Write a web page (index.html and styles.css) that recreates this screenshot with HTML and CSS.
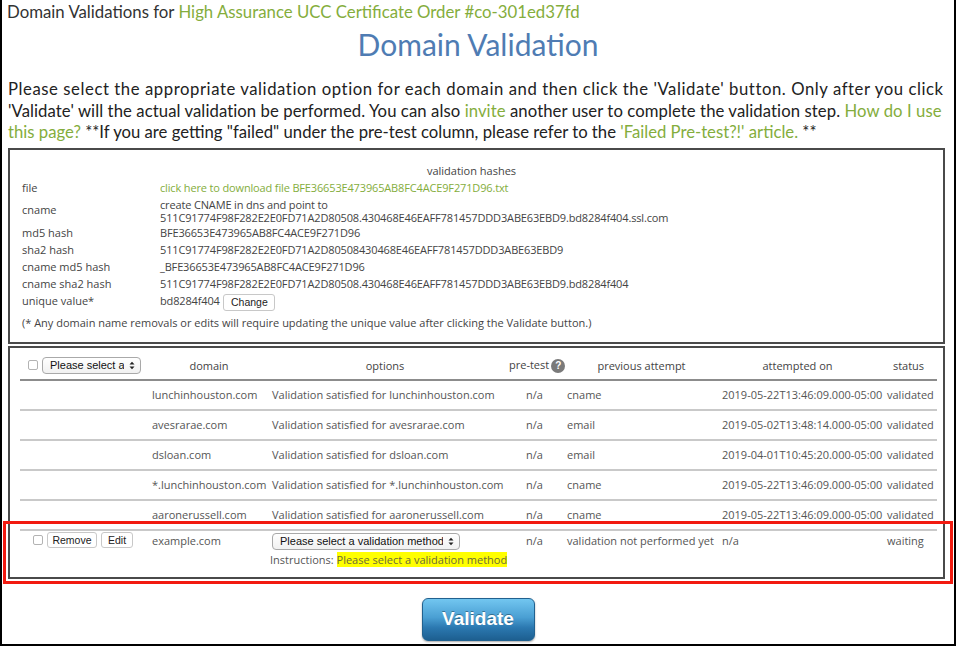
FILE: index.html
```html
<!DOCTYPE html>
<html>
<head>
<meta charset="utf-8">
<link rel="stylesheet" href="styles.css">
</head>
<body>
<div class="frame">
  <div class="crumb">Domain Validations for <a class="link" href="#">High Assurance UCC Certificate Order #co-301ed37fd</a></div>
  <h1 class="title">Domain Validation</h1>
  <p class="intro"><span class="line-a">Please select the appropriate validation option for each domain and then click the 'Validate' button. Only after you click</span><br><span class="line-b">'Validate' will the actual validation be performed. You can also <a class="link" href="#">invite</a> another user to complete the validation step. <a class="link" href="#">How do I use</a></span><br><a class="link" href="#">this page?</a> **If you are getting "failed" under the pre-test column, please refer to the <a class="link" href="#">'Failed Pre-test?!' article.</a> **</p>

  <div class="box hashes">
    <div class="hash-caption">validation hashes</div>
    <div class="hash-grid">
      <div class="hl">file</div><div class="hv"><a class="link" href="#">click here to download file BFE36653E473965AB8FC4ACE9F271D96.txt</a></div>
      <div class="hl hl-mid">cname</div><div class="hv hv-two">create CNAME in dns and point to<br>511C91774F98F282E2E0FD71A2D80508.430468E46EAFF781457DDD3ABE63EBD9.bd8284f404.ssl.com</div>
      <div class="hl">md5 hash</div><div class="hv">BFE36653E473965AB8FC4ACE9F271D96</div>
      <div class="hl">sha2 hash</div><div class="hv">511C91774F98F282E2E0FD71A2D80508430468E46EAFF781457DDD3ABE63EBD9</div>
      <div class="hl">cname md5 hash</div><div class="hv">_BFE36653E473965AB8FC4ACE9F271D96</div>
      <div class="hl">cname sha2 hash</div><div class="hv">511C91774F98F282E2E0FD71A2D80508.430468E46EAFF781457DDD3ABE63EBD9.bd8284f404</div>
      <div class="hl">unique value*</div><div class="hv">bd8284f404 <span class="btn btn-change">Change</span></div>
    </div>
    <div class="note">(* Any domain name removals or edits will require updating the unique value after clicking the Validate button.)</div>
  </div>

  <div class="box domains">
    <table class="dtable">
      <colgroup>
        <col class="c1"><col class="c2"><col class="c3"><col class="c4"><col class="c5"><col class="c6"><col class="c7">
      </colgroup>
      <thead>
        <tr>
          <th class="th-ctrl"><span class="ctrl"><span class="cb"></span><span class="select sel-head"><span class="sel-text">Please select a v</span><svg class="arr" width="6" height="9" viewBox="0 0 6 9"><path d="M0.5 3.5 L3 0.8 L5.5 3.5 Z M0.5 5.5 L3 8.2 L5.5 5.5 Z" fill="#222"/></svg></span></span></th>
          <th class="th-dom">domain</th>
          <th>options</th>
          <th class="th-pre">pre-test<span class="qmark">?</span></th>
          <th class="th-prev">previous attempt</th>
          <th>attempted on</th>
          <th>status</th>
        </tr>
      </thead>
      <tbody>
        <tr><td></td><td>lunchinhouston.com</td><td>Validation satisfied for lunchinhouston.com</td><td class="na">n/a</td><td>cname</td><td>2019-05-22T13:46:09.000-05:00</td><td>validated</td></tr>
        <tr><td></td><td>avesrarae.com</td><td>Validation satisfied for avesrarae.com</td><td class="na">n/a</td><td>email</td><td>2019-05-02T13:48:14.000-05:00</td><td>validated</td></tr>
        <tr><td></td><td>dsloan.com</td><td>Validation satisfied for dsloan.com</td><td class="na">n/a</td><td>email</td><td>2019-04-01T10:45:20.000-05:00</td><td>validated</td></tr>
        <tr><td></td><td>*.lunchinhouston.com</td><td>Validation satisfied for *.lunchinhouston.com</td><td class="na">n/a</td><td>cname</td><td>2019-05-22T13:46:09.000-05:00</td><td>validated</td></tr>
        <tr><td></td><td>aaronerussell.com</td><td>Validation satisfied for aaronerussell.com</td><td class="na">n/a</td><td>cname</td><td>2019-05-22T13:46:09.000-05:00</td><td>validated</td></tr>
        <tr class="pending">
          <td class="td-ctrl"><span class="ctrl"><span class="cb"></span><span class="btn btn-remove">Remove</span><span class="btn btn-edit">Edit</span></span></td>
          <td>example.com</td>
          <td>
            <span class="select sel-row"><span class="sel-text">Please select a validation method</span><svg class="arr" width="6" height="9" viewBox="0 0 6 9"><path d="M0.5 3.5 L3 0.8 L5.5 3.5 Z M0.5 5.5 L3 8.2 L5.5 5.5 Z" fill="#222"/></svg></span>
            <div class="instr">Instructions: <span class="hl-yellow">Please select a validation method</span></div>
          </td>
          <td class="na">n/a</td>
          <td>validation not performed yet</td>
          <td>n/a</td>
          <td>waiting</td>
        </tr>
      </tbody>
    </table>
  </div>

  <div class="actions"><button class="validate">Validate</button></div>

  <div class="redbox"></div>
</div>
</body>
</html>
```

FILE: styles.css
```css
html, body {
  margin: 0;
  padding: 0;
  background: #fff;
}

.frame {
  position: relative;
  box-sizing: border-box;
  width: 956px;
  height: 646px;
  border-left: 2px solid #000;
  border-right: 2px solid #000;
  border-bottom: 2px solid #000;
  font-family: "Lato", "Open Sans", sans-serif;
  color: #222;
  overflow: hidden;
}

.link {
  color: #84ad3c;
  text-decoration: none;
}

.crumb {
  padding-left: 5px;
  font-size: 16.8px;
  line-height: 24px;
  height: 24px;
  color: #333;
  white-space: nowrap;
}

.title {
  margin: 0;
  text-align: center;
  font-size: 30px;
  line-height: 40px;
  font-weight: 400;
  color: #4f7cb3;
}

.intro {
  margin: 15px 0 0 0;
  padding: 0 6px;
  font-size: 16.7px;
  line-height: 21.5px;
  color: #222;
  white-space: nowrap;
}

.line-a {
  letter-spacing: 0.57px;
}

.line-b {
  letter-spacing: 0.08px;
}

.box {
  box-sizing: border-box;
  margin: 0 9px 0 6px;
  border: 2px solid #4a4a4a;
  font-family: "Open Sans", sans-serif;
  font-size: 11px;
  color: #444;
}

.hashes {
  margin-top: 4px;
  height: 196px;
  padding: 12px 12px 0 12px;
}

.hash-caption {
  text-align: center;
  line-height: 17px;
  padding-right: 10px;
}

.hash-grid {
  display: grid;
  grid-template-columns: 138px 1fr;
  line-height: 13px;
}

.hl, .hv {
  padding: 2px 0;
  white-space: nowrap;
}

.hv {
  letter-spacing: -0.15px;
}

.hv-two {
  padding-bottom: 0;
}

.hl-mid {
  align-self: center;
}

.btn {
  display: inline-block;
  box-sizing: border-box;
  font-family: "Liberation Sans", Arial, sans-serif;
  font-size: 10.5px;
  letter-spacing: 0;
  color: #222;
  background: #fff;
  border: 1px solid #c8c8c8;
  border-radius: 3px;
  text-align: center;
  line-height: 14px;
  height: 16px;
}

.btn-change {
  width: 52px;
  margin-left: 1px;
  height: 17px;
  line-height: 15px;
  vertical-align: middle;
}

.note {
  margin-top: 1px;
  line-height: 17px;
  white-space: nowrap;
}

.domains {
  margin-top: 2px;
  height: 233px;
  padding: 4px 6px 0 10px;
}

.dtable {
  width: 100%;
  border-collapse: collapse;
  table-layout: fixed;
  color: #555;
}

.c1 { width: 125px; }
.c2 { width: 120px; }
.c3 { width: 240px; }
.c4 { width: 55px; }
.c5 { width: 155px; }
.c6 { width: 165px; }
.c7 { width: auto; }

.dtable th {
  font-weight: 400;
  color: #444;
  height: 27px;
  padding: 0;
  text-align: center;
  vertical-align: middle;
  border-bottom: 2px solid #8c8c8c;
  white-space: nowrap;
}

.dtable th.th-dom {
  padding-left: 8px;
}

.dtable th.th-pre {
  padding-left: 4px;
}

.dtable th.th-prev {
  padding-left: 8px;
}

.dtable td {
  height: 28px;
  padding: 0 0 0 7px;
  vertical-align: middle;
  border-bottom: 2px solid #c9c9c9;
  white-space: nowrap;
}

.dtable td.na {
  padding-left: 4px;
  text-align: center;
}

.dtable th.th-ctrl {
  text-align: left;
  padding-left: 8px;
}

.ctrl {
  display: flex;
  align-items: center;
  gap: 4px;
}

.cb {
  display: inline-block;
  box-sizing: border-box;
  width: 10px;
  height: 10px;
  border: 1px solid #b3b3b3;
  border-radius: 2px;
  background: #fff;
}

.select {
  display: inline-flex;
  align-items: center;
  box-sizing: border-box;
  height: 17px;
  padding: 0 5px 0 7px;
  border: 1px solid #a9a9a9;
  border-radius: 4px;
  background: linear-gradient(#ffffff, #f1f1f1);
  font-family: "Liberation Sans", Arial, sans-serif;
  font-size: 11px;
  color: #111;
}

.sel-text {
  flex: 1;
  overflow: hidden;
  white-space: nowrap;
}

.sel-head {
  width: 99px;
}

.sel-row {
  width: 188px;
}

.arr {
  flex: none;
  margin-left: 5px;
}

.qmark {
  display: inline-block;
  width: 14px;
  height: 14px;
  margin-left: 2px;
  border-radius: 50%;
  background: #7a7a7a;
  color: #fff;
  font-family: "Liberation Sans", Arial, sans-serif;
  font-weight: 700;
  font-size: 10px;
  line-height: 14px;
  text-align: center;
  vertical-align: middle;
}

.dtable tr.pending td {
  border-bottom: none;
  vertical-align: top;
  padding-top: 2px;
  height: auto;
  line-height: 15px;
}

.dtable tr.pending td.td-ctrl {
  padding-left: 13px;
  padding-top: 1px;
}

.btn-remove {
  width: 50px;
}

.btn-edit {
  width: 32px;
}

.dtable tr.pending .select {
  margin-top: -1px;
}

.instr {
  margin-top: 3px;
  margin-left: -2px;
  line-height: 14px;
}

.hl-yellow {
  background: #ffff00;
  color: #6b6b3a;
}

.actions {
  display: flex;
  justify-content: center;
  padding-top: 19px;
}

.validate {
  width: 113px;
  height: 43px;
  border: 1px solid #21618f;
  border-radius: 6px;
  background: linear-gradient(#72c6f0 0%, #4a9fd3 45%, #2b78b0 70%, #1d5f90 100%);
  box-shadow: 0 1px 2px rgba(0,0,0,0.35);
  color: #fff;
  font-family: "Liberation Sans", Arial, sans-serif;
  font-weight: 700;
  font-size: 19px;
  text-shadow: 0 -1px 0 rgba(0,0,0,0.35);
  padding: 0;
}

.redbox {
  position: absolute;
  left: 1px;
  top: 521px;
  width: 950px;
  height: 63px;
  box-sizing: border-box;
  border: 3px solid #f21a10;
  pointer-events: none;
}
```
